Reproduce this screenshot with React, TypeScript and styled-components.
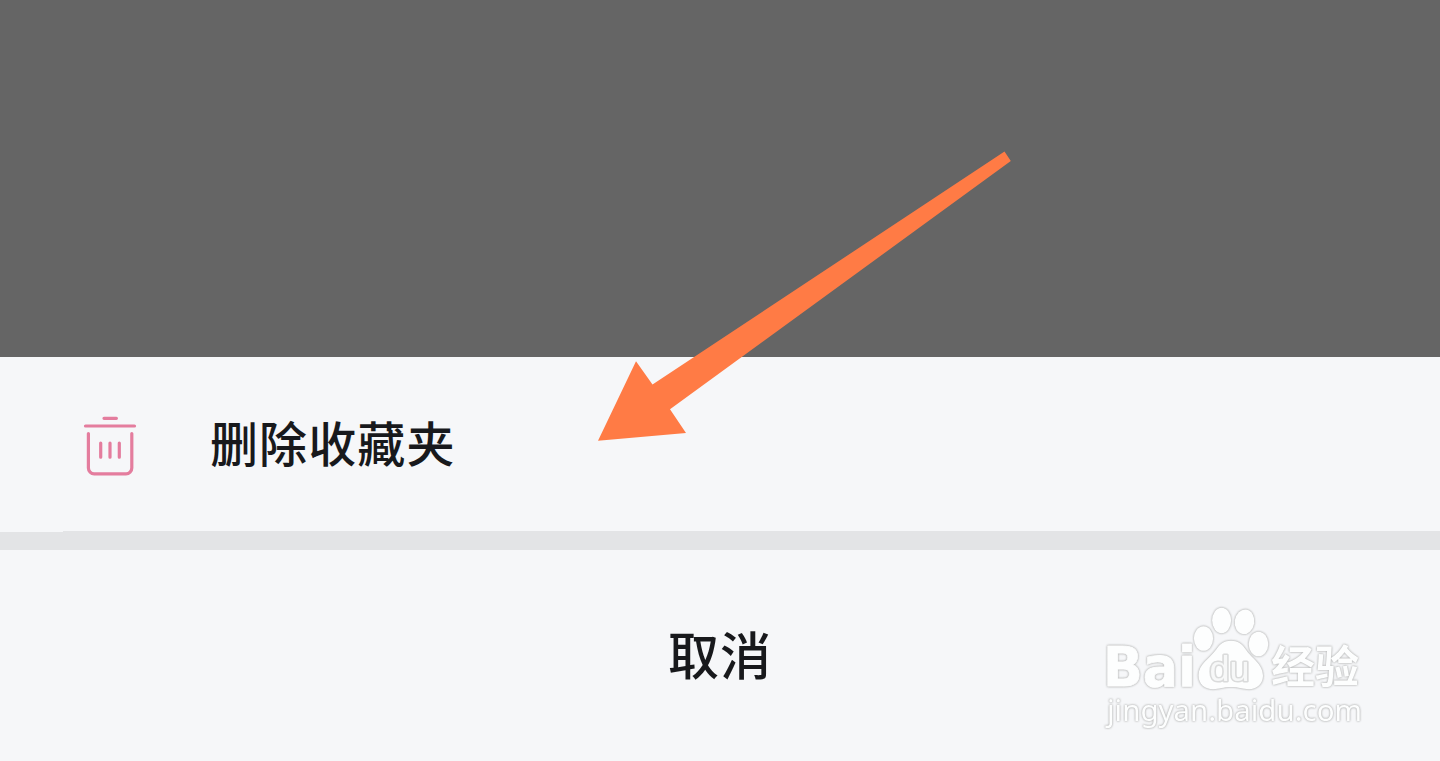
import React from "react";
import styled, { createGlobalStyle } from "styled-components";

const GlobalStyle = createGlobalStyle`
    body {
        margin: 0;
        overflow: hidden;
    }
`;

const Screen = styled.div`
    position: relative;
    display: flex;
    flex-direction: column;
    width: 1440px;
    height: 761px;
    overflow: hidden;
    background: #656565;
    font-family: "Noto Sans CJK SC", "Noto Sans", sans-serif;
    color: #18191c;
`;

const Backdrop = styled.div`
    flex: 1;
`;

const Sheet = styled.div`
    display: flex;
    flex-direction: column;
    background: #f6f7f9;
`;

const SheetItem = styled.button`
    display: flex;
    align-items: center;
    gap: 70px;
    height: 174px;
    padding: 2px 80px 0;
    border: 0;
    background: none;
    color: inherit;
    font: inherit;
`;

const ItemLabel = styled.span`
    padding-bottom: 8px;
    font-size: 48px;
    font-weight: 500;
    line-height: 72px;
    letter-spacing: 1.1px;
    white-space: nowrap;
`;

const ItemDivider = styled.div`
    height: 1px;
    margin-left: 63px;
    background: #e3e4e6;
`;

const SheetGap = styled.div`
    height: 18px;
    background: #e3e4e6;
`;

const CancelButton = styled.button`
    display: flex;
    align-items: center;
    justify-content: center;
    height: 211px;
    padding: 0 0 6px;
    border: 0;
    background: none;
    color: inherit;
    font: inherit;
    font-size: 51px;
    font-weight: 500;
    line-height: 76px;
    letter-spacing: 1px;
`;

const Pointer = styled.svg`
    position: absolute;
    left: 590px;
    top: 140px;
    pointer-events: none;
`;

const Watermark = styled.svg`
    position: absolute;
    left: 1090px;
    top: 595px;
    pointer-events: none;
    filter: drop-shadow(0 0 0.8px #b4b5b5) drop-shadow(0 0 0.6px #cccdcd);
`;

const TrashIcon: React.FC = () => (
    <svg
        width="60"
        height="66"
        viewBox="80 412 60 66"
        fill="none"
        stroke="#e47d9e"
        strokeWidth="3.2"
        strokeLinecap="round"
        strokeLinejoin="round"
    >
        <path d="M104 418.3h12.4M85.5 426h49" />
        <path d="M88.4 433.5v34.6a5.8 5.8 0 0 0 5.8 5.8h31.8a5.8 5.8 0 0 0 5.8-5.8v-34.6" />
        <path d="M100.7 443v14.2M110 443v14.2M119.3 443v14.2" />
    </svg>
);

const PointerArrow: React.FC = () => (
    <Pointer width="430" height="310" viewBox="590 140 430 310">
        <path
            d="M1004.5 151.5 1010.8 161 670 409.3 686 433 598 440.7 636 361.3 652.5 384.5Z"
            fill="#ff7b45"
        />
    </Pointer>
);

const BaiduWatermark: React.FC = () => (
    <Watermark
        width="290"
        height="150"
        viewBox="1090 595 290 150"
        fill="#fdfefe"
        strokeLinejoin="round"
    >
        <text
            x="1103"
            y="686"
            fontFamily="'DejaVu Sans', sans-serif"
            fontSize="55"
            fontWeight="700"
            stroke="#fdfefe"
            strokeWidth="0.8"
            textLength="93"
            lengthAdjust="spacingAndGlyphs"
        >
            Bai
        </text>
        <ellipse cx="1203.5" cy="638.5" rx="9.6" ry="12.3" />
        <ellipse cx="1221.6" cy="620.5" rx="9.5" ry="12.8" />
        <ellipse cx="1244.5" cy="621.8" rx="9.8" ry="12.3" transform="rotate(8 1244.5 621.8)" />
        <ellipse cx="1258.5" cy="644" rx="9.8" ry="12.3" />
        <path d="M1231 640.7c7 0 11 3 15 9 5 8 17 14 17 26 0 8-6 13.5-14 13.5-7 0-10-2.2-18-2.2s-11 2.2-18 2.2c-8 0-14.5-5-14.5-14 0-11 11.500-17 17.500-25.500 4-6 8-9 15-9Z" />
        <text
            x="1209.5"
            y="680.5"
            fontFamily="'Liberation Sans', sans-serif"
            fontSize="35"
            fill="#f7f8f8"
            stroke="#dadbdb"
            strokeWidth="3.2"
            paintOrder="stroke"
            textLength="40"
            lengthAdjust="spacingAndGlyphs"
        >
            du
        </text>
        <text
            x="1271"
            y="683"
            fontFamily="'Noto Sans CJK SC', sans-serif"
            fontSize="44"
            fontWeight="700"
            textLength="88"
            lengthAdjust="spacingAndGlyphs"
        >
            经验
        </text>
        <text
            x="1107"
            y="721"
            fontFamily="'Noto Sans', sans-serif"
            fontSize="29"
            textLength="255"
            lengthAdjust="spacingAndGlyphs"
        >
            jingyan.baidu.com
        </text>
    </Watermark>
);

const App: React.FC = () => (
    <>
        <GlobalStyle />
        <Screen>
            <Backdrop />
            <Sheet>
                <SheetItem type="button">
                    <TrashIcon />
                    <ItemLabel>删除收藏夹</ItemLabel>
                </SheetItem>
                <ItemDivider />
                <SheetGap />
                <CancelButton type="button">取消</CancelButton>
            </Sheet>
            <PointerArrow />
            <BaiduWatermark />
        </Screen>
    </>
);

export default App;
